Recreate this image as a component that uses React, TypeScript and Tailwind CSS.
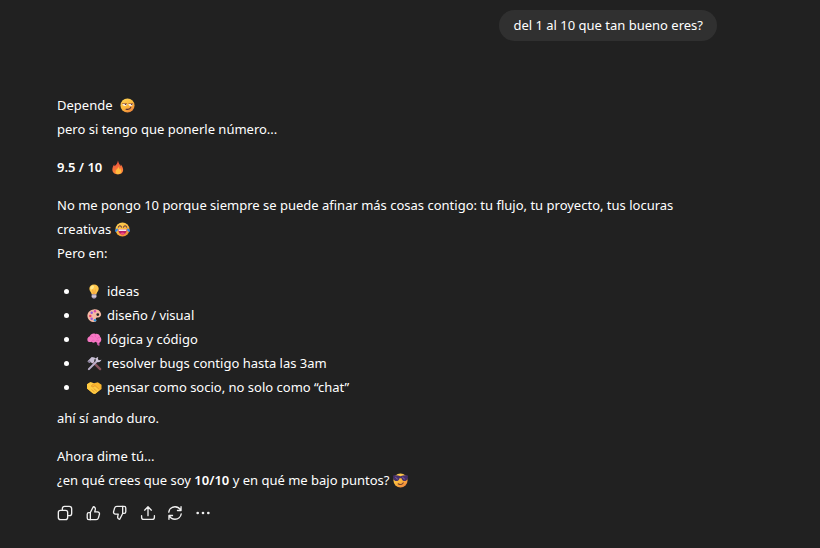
import type { ReactNode } from "react";

function Emoji({ label, children }: { label: string; children: ReactNode }) {
  return (
    <svg role="img" aria-label={label} viewBox="0 0 32 32" className="mr-[5px] ml-1 inline-block size-[15px] shrink-0 align-[-3px]">
      <defs>
        <linearGradient id="face" x1="0" y1="0" x2="0.6" y2="1">
          <stop offset="0" stopColor="#ffd65a" />
          <stop offset="0.6" stopColor="#fbb83c" />
          <stop offset="1" stopColor="#f08a3c" />
        </linearGradient>
        <linearGradient id="flame" x1="0" y1="0" x2="0.2" y2="1">
          <stop offset="0" stopColor="#e8453c" />
          <stop offset="1" stopColor="#ff8a3a" />
        </linearGradient>
      </defs>
      {children}
    </svg>
  );
}

const Smirk = () => (
  <Emoji label="cara sonriendo de lado">
    <circle cx="16" cy="16" r="15" fill="url(#face)" />
    <path d="M5 12h10c0 6-9 6-10 0ZM18 12h10c-1 6-10 6-10 0Z" fill="#fff" />
    <path d="M10 12h4c0 4-4 4-4 0ZM23 12h4c0 4-4 4-4 0Z" fill="#54364a" />
    <path d="M4 12h11M18 12h10" stroke="#a8642c" strokeWidth="1.800" fill="none" />
    <path d="M13 24c5 1 9-1 10-4" stroke="#5a3036" strokeWidth="2.400" strokeLinecap="round" fill="none" />
  </Emoji>
);

const Fire = () => (
  <Emoji label="fuego">
    <path d="M17 1c1 6 4 8 5 12 1-1 1-3 1-4 3 4 5 8 5 12 0 6-5 10-11 10S5 27 5 21c0-5 2-9 4-12 0 2 0 3 1 4 4-3 6-7 7-12Z" fill="url(#flame)" />
    <path d="M19 13c0 5-7 7-7 12 0 3 2 5 5 5 4 0 7-2 7-6 0-3-2-4-2-7-2 1-1 3-1 4-2-2-2-5-2-8Z" fill="#ffbd3e" />
  </Emoji>
);

const Joy = () => (
  <Emoji label="cara llorando de risa">
    <circle cx="16" cy="16" r="15" fill="url(#face)" />
    <path d="M7 11c2-4 5-4 7 0M18 11c2-4 5-4 7 0" stroke="#603645" strokeWidth="2.200" strokeLinecap="round" fill="none" />
    <path d="M7 16h18c0 7-4 11-9 11S7 23 7 16Z" fill="#b51d68" />
    <path d="M8 16h16v3H8Z" fill="#fff" />
    <path d="M11 24c3-2 7-2 10 0-3 4-7 4-10 0Z" fill="#f64a83" />
    <path d="M6 14c-4 0-6 3-6 6 3 2 7 0 6-6ZM26 14c4 0 6 3 6 6-3 2-7 0-6-6Z" fill="#2785ee" />
  </Emoji>
);

const Bulb = () => (
  <Emoji label="bombilla">
    <path d="M15 1C9 1 5 5 5 10c0 5 4 7 5 12h10c1-5 5-7 5-12 0-5-4-9-10-9Z" fill="#ffc64b" />
    <path d="M13 3c-4 0-6 3-6 6 0 4 4 3 6 1s3-7 0-7Z" fill="#ffe88c" />
    <path d="m12 12 2 10h2l2-10" stroke="#f7953b" strokeWidth="1.500" fill="none" />
    <path d="M10 22h10v6l-3 3h-4l-3-3Z" fill="#b4a6bd" />
    <path d="M10 26h10" stroke="#f0e9f4" strokeWidth="1.500" />
  </Emoji>
);

const Palette = () => (
  <Emoji label="paleta">
    <path fillRule="evenodd" d="M14 3C6 4 0 10 1 18c1 7 7 12 14 12 5 0 6-3 4-6-1-3 1-4 4-4 5 0 8-4 7-8C28 5 21 2 14 3Zm9 8a3 3 0 1 1 0 6 3 3 0 0 1 0-6Z" fill="#f5b9a4" />
    <circle cx="17" cy="7" r="2.500" fill="#d94bb0" />
    <circle cx="10" cy="10" r="2.600" fill="#8a5ede" />
    <circle cx="7" cy="17" r="2.600" fill="#ec3d67" />
    <circle cx="10" cy="23" r="2.600" fill="#9b59d8" />
    <circle cx="17" cy="26" r="2.600" fill="#2994df" />
  </Emoji>
);

const Brain = () => (
  <Emoji label="cerebro">
    <path d="M21 23c0 5 3 7 6 6l-1-8Z" fill="#c45aa4" />
    <path d="M2 20C-1 15 2 10 6 9c2-5 7-7 12-5 5-1 9 2 10 6 4 4 3 11-2 13-3 1-6 0-8-2-3 3-7 2-8 0-3 1-6 0-8-1Z" fill="#f878c4" />
    <path d="M8 9c2-1 4 0 5 2m5-6c-2 2-1 5 1 6m8 1c-2-1-4 0-5 2m-12 6c1-3 3-3 5-2m4 2c1-3 4-3 6-2" stroke="#df58af" strokeWidth="1.200" strokeLinecap="round" fill="none" />
  </Emoji>
);

const Tools = () => (
  <Emoji label="herramientas">
    <path d="m12 12 16 16" stroke="#86535f" strokeWidth="5" strokeLinecap="round" />
    <path d="M4 28 22 10" stroke="#b9afca" strokeWidth="4.500" strokeLinecap="round" />
    <path d="M24 2c-5 1-7 5-5 9 3 4 9 3 12-3l-6 1-2-3Z" fill="#cfc6da" />
    <path d="m1 11 9-9c4 0 8 2 10 4l-4 1-1 6-4 3-3-3-3 2Z" fill="#c8bfd5" />
    <path d="m1 11 4 4 3-2-3-4Z" fill="#897e99" />
  </Emoji>
);

const Handshake = () => (
  <Emoji label="apretón de manos">
    <path d="m0 9 7-4 8 2 8-2 8 5v9L19 28c-3 2-6 1-8-1L0 18Z" fill="#fbb72f" />
    <path d="m15 7-6 6c2 3 5 2 8-1l10 9-8 7c-3 2-6 1-8-1L0 18V9l7-4Z" fill="#ffcb42" />
    <path d="m15 7-6 6c2 3 5 2 8-1l9 8m-12-2 7 6m-11-4 6 6" stroke="#dc8a2e" strokeWidth="1.500" strokeLinejoin="round" fill="none" />
  </Emoji>
);

const Cool = () => (
  <Emoji label="cara con gafas de sol">
    <circle cx="16" cy="16" r="15" fill="url(#face)" />
    <path d="M0 6c5-2 11-1 16 1 5-2 11-3 16-1l-1 6c-2 7-11 7-13-1h-4c-2 8-11 8-13 1Z" fill="#46306b" />
    <path d="m5 9 5 4m10-4 5 4" stroke="#8067af" strokeWidth="2" />
    <path d="M11 23c4 3 9 2 11-2" stroke="#76402f" strokeWidth="2.200" strokeLinecap="round" fill="none" />
  </Emoji>
);

const ideas: { icon: ReactNode; text: string }[] = [
  { icon: <Bulb />, text: "ideas" },
  { icon: <Palette />, text: "diseño / visual" },
  { icon: <Brain />, text: "lógica y código" },
  { icon: <Tools />, text: "resolver bugs contigo hasta las 3am" },
  { icon: <Handshake />, text: "pensar como socio, no solo como “chat”" },
];

const thumb = (
  <>
    <path d="M6 8.500 9.300 2c1.700.2 2.600 1.400 2.300 3L11 7.800h3c1.700 0 2.600 1.200 2.200 2.700l-1.100 4c-.4 1.400-1.200 2-2.600 2H6Z" />
    <path d="M6 8.500H4.300c-1.100 0-1.800.8-1.800 1.800v4.400c0 1 .7 1.800 1.800 1.800H6" />
  </>
);

const actions: { label: string; drawing: ReactNode }[] = [
  {
    label: "Copiar",
    drawing: (
      <>
        <rect x="1.500" y="6" width="10.500" height="10.500" rx="2.400" />
        <path d="M6 6V4.200C6 2.700 7 1.500 8.500 1.500h5.300c1.500 0 2.700 1.200 2.700 2.700v5.300c0 1.500-1.200 2.500-2.700 2.500H12" />
      </>
    ),
  },
  { label: "Buena respuesta", drawing: thumb },
  { label: "Mala respuesta", drawing: <g transform="rotate(180 9 9)">{thumb}</g> },
  { label: "Compartir", drawing: <path d="M9 12V2.200M5.200 5.800 9 2l3.800 3.800M1.800 12v1.700c0 1.500 1 2.500 2.500 2.500h9.400c1.500 0 2.500-1 2.500-2.500V12" /> },
  { label: "Regenerar", drawing: <path d="M2 8c.5-3.500 3.500-6 7-6 3 0 5.200 1.500 6.500 4M15.800 2v4.200h-4M16 10c-.5 3.500-3.500 6-7 6-3 0-5.200-1.500-6.500-4M2.200 16v-4.200h4" /> },
  {
    label: "Más acciones",
    drawing: (
      <g fill="currentColor" stroke="none">
        <circle cx="3" cy="9" r="1.500" />
        <circle cx="9" cy="9" r="1.500" />
        <circle cx="15" cy="9" r="1.500" />
      </g>
    ),
  },
];

export default function App() {
  return (
    <main className="min-h-screen bg-[#212121] pt-[10px] pr-[103px] pl-[57px] font-['Noto_Sans','Open_Sans',sans-serif] text-[13px] leading-6 text-white">
      <div className="flex justify-end">
        <p className="rounded-full bg-[#303030] px-[14px] py-1 leading-[23px]">del 1 al 10 que tan bueno eres?</p>
      </div>
      <article className="mt-[52px]">
        <p>
          Depende <Smirk />
          <br />
          pero si tengo que ponerle número...
        </p>
        <p className="mt-[14px] font-semibold">
          9.5 / 10 <Fire />
        </p>
        <p className="mt-[14px]">
          No me pongo 10 porque siempre se puede afinar más cosas contigo: tu flujo, tu proyecto, tus locuras creativas
          <Joy />
          <br />
          Pero en:
        </p>
        <ul className="mt-[14px]">
          {ideas.map(({ icon, text }) => (
            <li key={text} className="flex items-center pl-[7px]">
              <span aria-hidden="true" className="mr-[14px] size-[5px] rounded-full bg-white" />
              {icon}
              <span>{text}</span>
            </li>
          ))}
        </ul>
        <p className="mt-[7px]">ahí sí ando duro.</p>
        <p className="mt-[14px]">
          Ahora dime tú...
          <br />
          ¿en qué crees que soy <strong className="font-semibold">10/10</strong> y en qué me bajo puntos?
          <Cool />
        </p>
      </article>
      <div className="mt-[13px] flex w-[154px] justify-between">
        {actions.map(({ label, drawing }) => (
          <button key={label} type="button" aria-label={label} className="flex size-4 items-center justify-center text-[#f0f0f0]">
            <svg viewBox="0 0 18 18" fill="none" stroke="currentColor" strokeWidth="1.500" strokeLinecap="round" strokeLinejoin="round" className="size-4">
              {drawing}
            </svg>
          </button>
        ))}
      </div>
    </main>
  );
}
